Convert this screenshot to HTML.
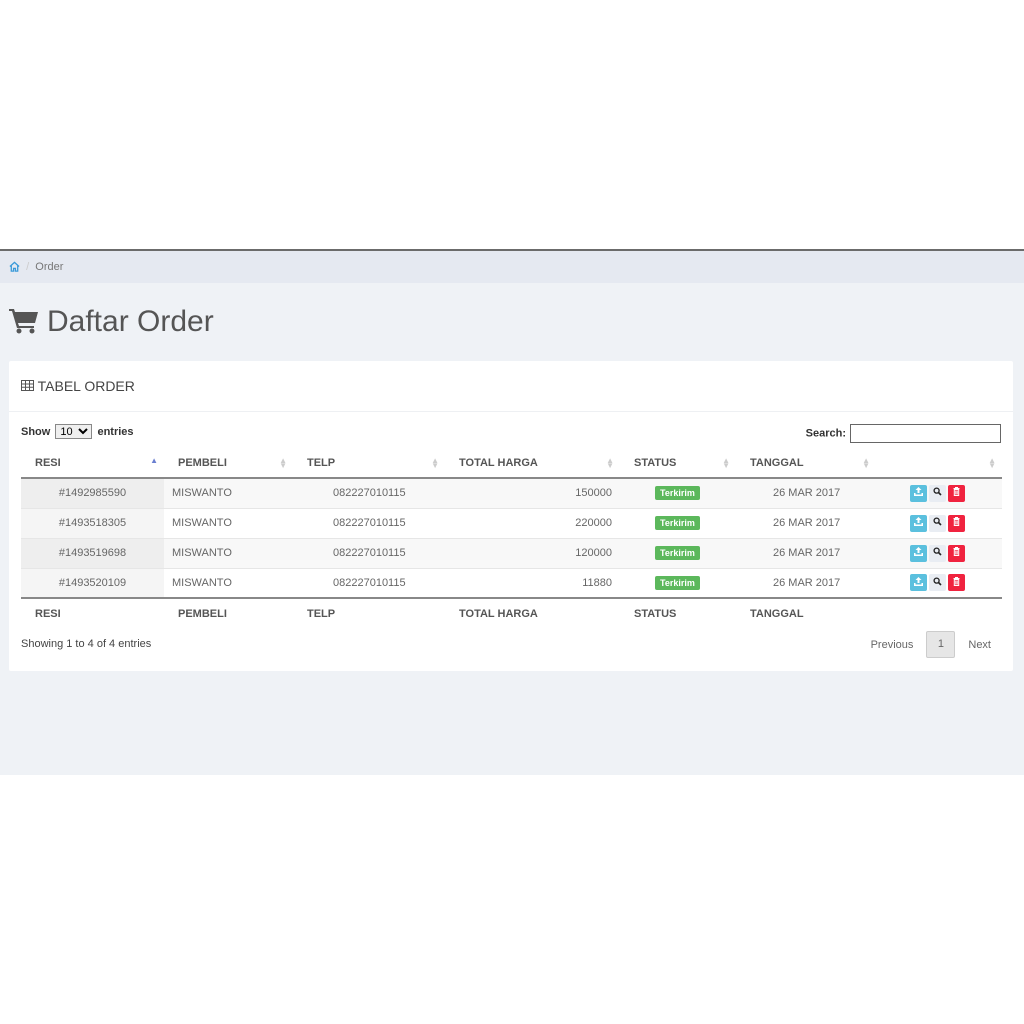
<!DOCTYPE html>
<html><head><style>
*{box-sizing:border-box;margin:0;padding:0}
body{width:1024px;height:1024px;background:#fff;font-family:"Liberation Sans",sans-serif;position:relative;overflow:hidden}
.wrap{position:absolute;top:249px;left:0;width:1024px;height:526px;background:#eff2f6;border-top:2px solid #6b6b6b}
.bc{height:32px;background:#e5e9f1;font-size:11px;color:#777;padding:10px 0 0 9px}
.bc svg{vertical-align:-2px}
h1{position:absolute;top:53px;left:9px;font-size:30px;font-weight:normal;color:#555;line-height:36px}
h1 svg{vertical-align:-3px;margin-right:8px}
.card{position:absolute;top:110px;left:9px;width:1004px;height:310px;background:#fff;border-radius:2px}
.ch{height:51px;border-bottom:1px solid #eef0f3;padding:17px 0 0 12px;font-size:14px;color:#444}
.ctl{position:absolute;top:63px;left:12px;font-size:11px;font-weight:bold;color:#333}
.ctl select{font-size:11px;width:37px;height:15px;border:1px solid #888;margin:0 2px}
.srch{position:absolute;top:63px;right:12px;font-size:11px;font-weight:bold;color:#333}
.srch span{display:inline-block;width:151px;height:19px;border:1px solid #666;vertical-align:middle;margin-left:4px}
table{position:absolute;top:88px;left:12px;width:981px;border-collapse:collapse;font-size:11px;color:#666}
th{text-align:left;font-weight:bold;color:#555;height:29px;padding-left:14px;position:relative}
thead th{border-bottom:2px solid #888}
tfoot th{border-top:2px solid #888;height:30px}
td{height:30px;border-top:1px solid #e6e6e6}
tbody tr:nth-child(odd){background:#f8f8f8}
tbody tr:nth-child(odd) td:first-child{background:#eeeeee}
tbody tr:nth-child(even) td:first-child{background:#f5f5f5}
.s{position:absolute;right:6px;top:9px;font-size:8px;color:#ccc;line-height:5px}
.lbl{background:#5cb85c;color:#fff;font-weight:bold;font-size:9px;padding:2px 5px;border-radius:2px}
.b{display:inline-block;width:17px;height:17px;border-radius:2px;vertical-align:middle;margin-right:2px;text-align:center;line-height:15px}
.b svg{vertical-align:middle}
.info{position:absolute;top:277px;left:12px;font-size:11px;color:#444}
.pg{position:absolute;top:270px;right:22px;font-size:11px;color:#666}
.pg span{display:inline-block;vertical-align:middle}
.pg .a{width:29px;height:27px;border:1px solid #ccc;background:#e6e6e6;text-align:center;line-height:25px;margin:0 13px;border-radius:2px}
</style></head><body>
<div class="wrap">
<div class="bc"><svg width="11" height="11" viewBox="0 0 12 12"><path d="M1 6L6 1.5 11 6M2.5 5v6h2.5V8h2v3h2.5V5" fill="none" stroke="#3a9ad9" stroke-width="1.4"/></svg> &nbsp;<span style="color:#ccc">/</span> &nbsp;Order</div>
<h1><svg width="30" height="26" viewBox="0 0 30 26"><path d="M0 1h5l1 3h23l-3 11H9l1 3h15v2H8L3 3H0z" fill="#555"/><circle cx="10" cy="23" r="2.5" fill="#555"/><circle cx="23" cy="23" r="2.5" fill="#555"/></svg>Daftar Order</h1>
<div class="card">
<div class="ch"><svg width="13" height="11" viewBox="0 0 13 11"><path d="M.5.5h12v10H.5zM.5 4h12M.5 7.2h12M4.5.5v10M8.5.5v10" fill="none" stroke="#555"/></svg> TABEL ORDER</div>
<div class="ctl">Show <select><option>10</option></select> entries</div>
<div class="srch">Search:<span></span></div>
<table>
<thead><tr><th style="width:143px">RESI<span class="s" style="color:#6a7fd0">▲</span></th><th style="width:129px">PEMBELI<span class="s">▲<br>▼</span></th><th style="width:152px">TELP<span class="s">▲<br>▼</span></th><th style="width:175px">TOTAL HARGA<span class="s">▲<br>▼</span></th><th style="width:116px">STATUS<span class="s">▲<br>▼</span></th><th style="width:140px">TANGGAL<span class="s">▲<br>▼</span></th><th><span class="s">▲<br>▼</span></th></tr></thead>
<tbody>
<tr><td style="text-align:center">#1492985590</td><td style="padding-left:8px">MISWANTO</td><td style="padding-left:40px">082227010115</td><td style="text-align:right;padding-right:8px">150000</td><td style="padding-left:35px"><span class="lbl">Terkirim</span></td><td style="padding-left:37px">26 MAR 2017</td><td style="padding-left:34px"><span class="b" style="background:#5bc0de"><svg width="9" height="9" viewBox="0 0 9 9"><path d="M4.5 0L1.5 3h2v3h2V3h2zM0 6h1.5v1.5h6V6H9v3H0z" fill="#fff"/></svg></span><span class="b" style="background:#e9edf3"><svg width="9" height="9" viewBox="0 0 9 9"><circle cx="3.6" cy="3.6" r="2.5" fill="none" stroke="#222" stroke-width="1.3"/><path d="M5.5 5.5L8 8" stroke="#222" stroke-width="1.6"/></svg></span><span class="b" style="background:#f0233f"><svg width="9" height="9" viewBox="0 0 9 9"><path d="M1.5 1.5h6M3.5 1.5V.5h2v1M2.3 2.5h4.4v6H2.3zM3.8 3.5v4M5.2 3.5v4" fill="none" stroke="#fff"/></svg></span></td></tr>
<tr><td style="text-align:center">#1493518305</td><td style="padding-left:8px">MISWANTO</td><td style="padding-left:40px">082227010115</td><td style="text-align:right;padding-right:8px">220000</td><td style="padding-left:35px"><span class="lbl">Terkirim</span></td><td style="padding-left:37px">26 MAR 2017</td><td style="padding-left:34px"><span class="b" style="background:#5bc0de"><svg width="9" height="9" viewBox="0 0 9 9"><path d="M4.5 0L1.5 3h2v3h2V3h2zM0 6h1.5v1.5h6V6H9v3H0z" fill="#fff"/></svg></span><span class="b" style="background:#e9edf3"><svg width="9" height="9" viewBox="0 0 9 9"><circle cx="3.6" cy="3.6" r="2.5" fill="none" stroke="#222" stroke-width="1.3"/><path d="M5.5 5.5L8 8" stroke="#222" stroke-width="1.6"/></svg></span><span class="b" style="background:#f0233f"><svg width="9" height="9" viewBox="0 0 9 9"><path d="M1.5 1.5h6M3.5 1.5V.5h2v1M2.3 2.5h4.4v6H2.3zM3.8 3.5v4M5.2 3.5v4" fill="none" stroke="#fff"/></svg></span></td></tr>
<tr><td style="text-align:center">#1493519698</td><td style="padding-left:8px">MISWANTO</td><td style="padding-left:40px">082227010115</td><td style="text-align:right;padding-right:8px">120000</td><td style="padding-left:35px"><span class="lbl">Terkirim</span></td><td style="padding-left:37px">26 MAR 2017</td><td style="padding-left:34px"><span class="b" style="background:#5bc0de"><svg width="9" height="9" viewBox="0 0 9 9"><path d="M4.5 0L1.5 3h2v3h2V3h2zM0 6h1.5v1.5h6V6H9v3H0z" fill="#fff"/></svg></span><span class="b" style="background:#e9edf3"><svg width="9" height="9" viewBox="0 0 9 9"><circle cx="3.6" cy="3.6" r="2.5" fill="none" stroke="#222" stroke-width="1.3"/><path d="M5.5 5.5L8 8" stroke="#222" stroke-width="1.6"/></svg></span><span class="b" style="background:#f0233f"><svg width="9" height="9" viewBox="0 0 9 9"><path d="M1.5 1.5h6M3.5 1.5V.5h2v1M2.3 2.5h4.4v6H2.3zM3.8 3.5v4M5.2 3.5v4" fill="none" stroke="#fff"/></svg></span></td></tr>
<tr><td style="text-align:center">#1493520109</td><td style="padding-left:8px">MISWANTO</td><td style="padding-left:40px">082227010115</td><td style="text-align:right;padding-right:8px">11880</td><td style="padding-left:35px"><span class="lbl">Terkirim</span></td><td style="padding-left:37px">26 MAR 2017</td><td style="padding-left:34px"><span class="b" style="background:#5bc0de"><svg width="9" height="9" viewBox="0 0 9 9"><path d="M4.5 0L1.5 3h2v3h2V3h2zM0 6h1.5v1.5h6V6H9v3H0z" fill="#fff"/></svg></span><span class="b" style="background:#e9edf3"><svg width="9" height="9" viewBox="0 0 9 9"><circle cx="3.6" cy="3.6" r="2.5" fill="none" stroke="#222" stroke-width="1.3"/><path d="M5.5 5.5L8 8" stroke="#222" stroke-width="1.6"/></svg></span><span class="b" style="background:#f0233f"><svg width="9" height="9" viewBox="0 0 9 9"><path d="M1.5 1.5h6M3.5 1.5V.5h2v1M2.3 2.5h4.4v6H2.3zM3.8 3.5v4M5.2 3.5v4" fill="none" stroke="#fff"/></svg></span></td></tr>
</tbody>
<tfoot><tr><th>RESI</th><th>PEMBELI</th><th>TELP</th><th>TOTAL HARGA</th><th>STATUS</th><th>TANGGAL</th><th></th></tr></tfoot>
</table>
<div class="info">Showing 1 to 4 of 4 entries</div>
<div class="pg"><span>Previous</span><span class="a">1</span><span>Next</span></div>
</div>
</div>
</body></html>
